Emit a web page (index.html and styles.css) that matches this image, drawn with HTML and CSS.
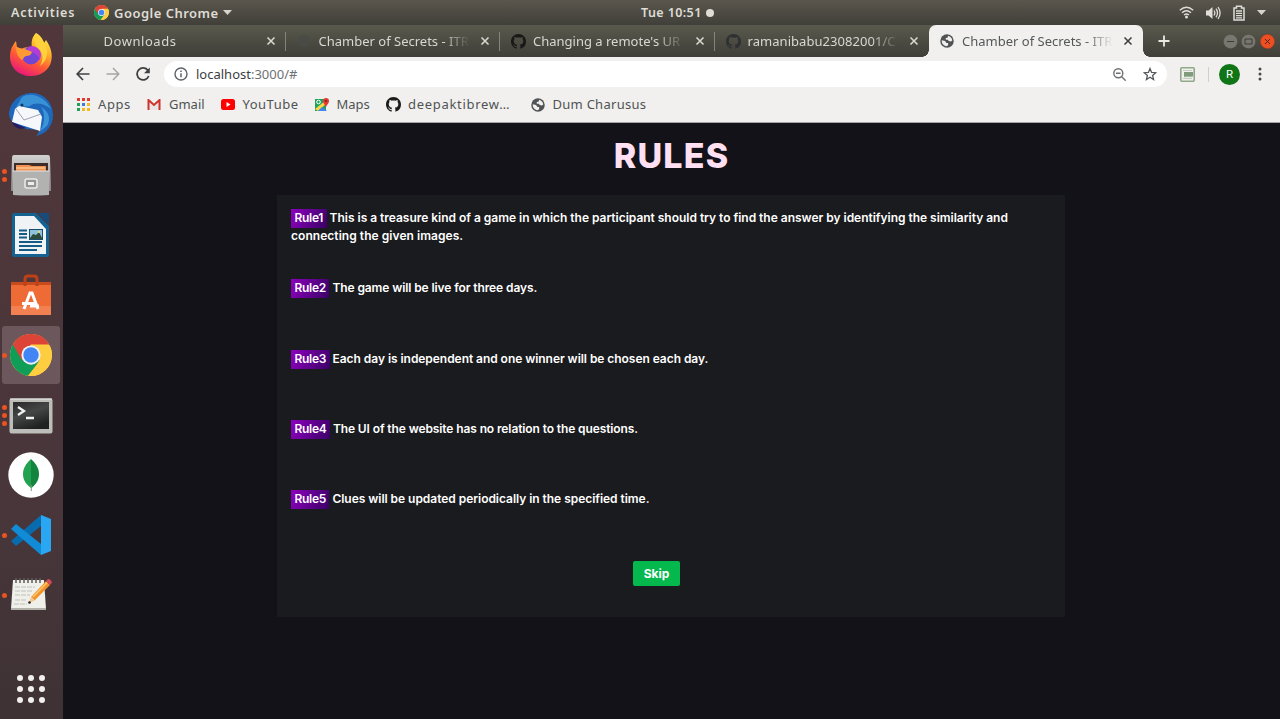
FILE: index.html
```html
<!DOCTYPE html>
<html lang="en">
<head>
<meta charset="utf-8">
<title>Chamber of Secrets - ITRIX</title>
<link rel="stylesheet" href="styles.css">
</head>
<body>
<svg class="defs" width="0" height="0">
  <symbol id="chrome" viewBox="0 0 48 48">
    <circle cx="24" cy="24" r="24" fill="#ffcd40"/>
    <path d="M24 24 3.2 12A24 24 0 0 0 20.5 47.7L34.5 30z" fill="#0f9d58"/>
    <path d="M3.2 12A24 24 0 0 1 44.8 12H24L13.6 30z" fill="#db4437"/>
    <path d="M24 13H45.3A24 24 0 0 1 23.5 48L34 29z" fill="#ffcd40"/>
    <circle cx="24" cy="24" r="11" fill="#f1f1f1"/>
    <circle cx="24" cy="24" r="8.8" fill="#4285f4"/>
  </symbol>
  <symbol id="github" viewBox="0 0 16 16">
    <path fill="currentColor" d="M8 0C3.58 0 0 3.58 0 8c0 3.54 2.29 6.53 5.47 7.59.4.07.55-.17.55-.38 0-.19-.01-.82-.01-1.49-2.01.37-2.53-.49-2.69-.94-.09-.23-.48-.94-.82-1.13-.28-.15-.68-.52-.01-.53.63-.01 1.08.58 1.23.82.72 1.21 1.87.87 2.33.66.07-.52.28-.87.51-1.07-1.78-.2-3.64-.89-3.64-3.95 0-.87.31-1.59.82-2.15-.08-.2-.36-1.02.08-2.12 0 0 .67-.21 2.2.82.64-.18 1.32-.27 2-.27s1.36.09 2 .27c1.53-1.04 2.2-.82 2.2-.82.44 1.1.16 1.92.08 2.12.51.56.82 1.27.82 2.15 0 3.07-1.87 3.75-3.65 3.95.29.25.54.73.54 1.48 0 1.07-.01 1.93-.01 2.2 0 .21.15.46.55.38A8.01 8.01 0 0 0 16 8c0-4.42-3.58-8-8-8z"/>
  </symbol>
  <symbol id="globe" viewBox="0 0 16 16">
    <circle cx="8" cy="8" r="7.7" fill="#505356"/>
    <path d="M2 7.200 5.800 8l1.500 2.200h2v2.600l-1.800 1.100C4 13.600 1.800 11 2 7.200zM9.300 2c2.500.6 4.500 2.700 4.700 5.500l-1.500 1-2.600-.4-.8-1.500H6.600V4.700l2-.5z" fill="#f1f0ee"/>
  </symbol>
  <symbol id="close" viewBox="0 0 10 10"><path d="M1.500 1.500l7 7M8.500 1.500l-7 7" stroke="currentColor" stroke-width="1.600"/></symbol>
</svg>

<header class="topbar">
  <span class="activities">Activities</span>
  <span class="app-menu"><svg width="15" height="15"><use href="#chrome"/></svg><span class="app-name">Google Chrome</span><svg width="9" height="5"><path d="M0 0h9L4.500 5z" fill="#d6d4cf"/></svg></span>
  <span class="clock">Tue 10:51<i class="dot"></i></span>
  <span class="status">
    <svg width="15" height="13" viewBox="0 0 15 13" fill="none" stroke="#deddd8"><path d="M.8 4.200Q7.500-1.500 14.200 4.200" stroke-width="1.400"/><path d="M3 6.700q4.500-4 9 0" stroke-width="1.400"/><path d="M5 9q2.500-2 5 0" stroke-width="1.300"/><circle cx="7.500" cy="11" r="1.500" fill="#deddd8" stroke="none"/></svg>
    <svg width="15" height="14" viewBox="0 0 15 14" fill="none" stroke="#deddd8"><path d="M0 4.500h2.500L6.500 1v12l-4-3.500H0z" fill="#deddd8" stroke="none"/><path d="M8 4.500q1.700 2.500 0 5M10 2.700q3 4.300 0 8.600M12 1q4.200 6 0 12" stroke-width="1.300"/></svg>
    <svg width="12" height="16" viewBox="0 0 12 16" fill="none" stroke="#deddd8"><path d="M1 3h2.500V1.200h5V3H11v12H1z" stroke-width="1.500"/><path d="M3 6h6M3 8.300h6M3 10.600h6M3 12.900h6" stroke-width="1.300"/></svg>
    <svg width="9" height="5"><path d="M0 0h9L4.500 5z" fill="#d6d4cf"/></svg>
  </span>
</header>

<div class="desktop">
<nav class="dock">
  <div class="slot"><svg width="46" height="48" viewBox="0 0 46 48">
    <defs><linearGradient id="ff" x1=".8" y1="0" x2=".3" y2="1"><stop offset="0" stop-color="#fff04a"/><stop offset=".35" stop-color="#ffb02a"/><stop offset=".65" stop-color="#ff5a35"/><stop offset="1" stop-color="#e8157d"/></linearGradient></defs>
    <path d="M28 2c4 2 7 6 8 10l2-3c5 7 7 15 5 22-2 8-10 14-20 14C11 45 2 37 2 26c0-7 2-11 6-16l1 6 4 2c4-2 8-2 11-2-1-5 0-10 4-14z" fill="url(#ff)"/>
    <circle cx="23" cy="24.500" r="9" fill="#7245d5"/>
    <path d="M20 16c5-3 13 1 13 8 0 2-1 4-2 6 1-5-4-9-11-9z" fill="#b13dd5"/>
    <path d="M8 16l7 2c4 0 6 2 9 3-1 3-3 4-6 4-3 1-2 3-4 4-4-2-6-8-6-13z" fill="#ff9a32"/>
    <path d="M28 2c4 5 9 8 11 16 1 8-2 13-7 17 4-7 3-13-1-17-4-3-6-9-3-16z" fill="#ffd23b"/>
  </svg></div>
  <div class="slot"><svg width="46" height="46" viewBox="0 0 46 46">
    <path d="M1 23C1 11 11 1 24 1c12 0 21 10 21 22 0 11-7 19-17 21l5-6C16 38 3 34 1 23z" fill="#1e67ba"/>
    <path d="M14 5c9-6 24 0 29 12-8-6-16-7-21-3-7 1-11-1-16 5z" fill="#3a92d6"/>
    <path d="M33 15c5 7 4 19-3 26l9-7c4-7 2-15-6-19z" fill="#3c93d7"/>
    <path d="M7 17l4-3 19 4 4 7-2 14L4 30z" fill="#f6f7fb"/>
    <path d="M8 17l8 11 17-6" fill="none" stroke="#9aa4b2"/>
    <path d="M4 30c2 6 8 8 14 6z" fill="#271a5e"/><circle cx="14" cy="13" r="1.500" fill="#17355f"/>
  </svg></div>
  <div class="slot"><i class="pips"><b></b><b></b></i><svg width="42" height="44" viewBox="0 0 42 44">
    <defs><linearGradient id="cab" x2="0" y2="1"><stop stop-color="#d1d1cf"/><stop offset="1" stop-color="#8e8e8d"/></linearGradient></defs>
    <path d="M4 2h34q2 0 2 3l1 33H1L2 5q0-3 2-3z" fill="url(#cab)"/><path d="M4 10h34v10H4z" fill="#3c2d28"/><path d="M6 12h13l3 1h14v8H6z" fill="#f19151"/><path d="M6 15h29" stroke="#ffe1b0"/>
    <path d="M3 18h36v24q-18 1-36 0z" fill="#b2b2b1"/><path d="M3 18h36" stroke="#e4e4e2"/><rect x="15" y="26" width="12" height="9" rx="2" fill="#969695" stroke="#ececeb" stroke-width="1.500"/><rect x="18" y="29" width="6" height="3" fill="#eee"/>
  </svg></div>
  <div class="slot"><svg width="40" height="46" viewBox="0 0 40 46">
    <path d="M3 1h22l13 13v29q0 2-2 2H3q-2 0-2-2V3q0-2 2-2z" fill="#146291"/><path d="M27 1h11v12z" fill="#164b7b"/><path d="M4 4h19l12 13v25H4z" fill="#f0f3f5"/>
    <path d="M8 18.500h8M8 22h8M8 25.500h8M8 30h23M8 34h23M8 38h18" stroke="#145b86" stroke-width="2"/><path d="M18 17h14v11H18z" fill="#174d6a"/><path d="M19 18h12v9H19z" fill="#8fc3dc"/><path d="M19 26l3-4 3 1 3-3 3 6v1H19z" fill="#2c4b38"/><circle cx="28" cy="20" r="1" fill="#ffdc5e"/>
  </svg></div>
  <div class="slot"><svg width="42" height="42" viewBox="0 0 42 42">
    <path d="M1 8h40v33H1z" fill="#ef6b35"/><path d="M1 8h40v3H1z" fill="#c84b1d"/><path d="M1 32h40v9H1z" fill="#f28050"/><path d="M15 12V5q0-3 3-3h6q3 0 3 3v7" fill="none" stroke="#bd4017" stroke-width="3"/><path d="M14 35l6-16h2l6 16M12 29.500h15M20 32h9" fill="none" stroke="#fff" stroke-width="3"/>
  </svg></div>
  <div class="slot current"><i class="pips"><b></b></i><svg width="42" height="42"><use href="#chrome"/></svg></div>
  <div class="slot lower"><i class="pips"><b></b><b></b><b></b></i><svg width="44" height="36" viewBox="0 0 44 36">
    <defs><linearGradient id="term" x2=".5" y2="1"><stop stop-color="#292929"/><stop offset=".5" stop-color="#454746"/><stop offset="1" stop-color="#202222"/></linearGradient></defs>
    <rect x=".5" y=".5" width="43" height="35" rx="2" fill="#bdbdb9"/><path d="M1 1h42" stroke="#eee"/><rect x="4" y="4" width="36" height="27" fill="url(#term)"/><path d="M9 9l6 4-6 4M17 20h8" fill="none" stroke="#f2f2f2" stroke-width="2.300"/>
  </svg></div>
  <div class="slot"><svg width="46" height="46" viewBox="0 0 46 46"><circle cx="23" cy="23" r="22.700" fill="#fff"/><path d="M23 7c5 5 8 9 8 15 0 7-4 11-7.500 14H23z" fill="#13843e"/><path d="M23 7c-5 5-8 9-8 15 0 7 4 11 8 14z" fill="#20a251"/><path d="M23.300 33v6" stroke="#7e9d80"/></svg></div>
  <div class="slot"><i class="pips"><b></b></i><svg width="42" height="42" viewBox="0 0 42 42"><path d="M1 27l5 5 25-20V1z" fill="#086bad"/><path d="M1 15l5-5 25 20v11z" fill="#128bd7"/><path d="M31 1l10 4v32l-10 4z" fill="#2aa7f2"/></svg></div>
  <div class="slot"><i class="pips"><b></b></i><svg width="44" height="38" viewBox="0 0 44 38">
    <path d="M4 4h31l2 29H2z" fill="#f0f0eb"/><path d="M2 32h35v2H2z" fill="#b2b1aa"/>
    <path d="M7 2v5M11 2v5M15 2v5M19 2v5M23 2v5M27 2v5M31 2v5" stroke="#5d5b5b" stroke-width="1.500"/>
    <path d="M6 11h20M6 15h18M6 19h15M6 24h12M5 28h13" stroke="#c0bfbc" stroke-dasharray="5 1"/>
    <path d="M20 27l2.500-6.500L37 5l4 4-15 15z" fill="#f1922b"/><path d="M24 21 38 6.500" stroke="#ffc568" stroke-width="1.700"/><path d="M37 5l2-2q3 0 4 3.500l-2 2.500z" fill="#d24a59"/><path d="M20 27l2.500-6 3 3z" fill="#f3cd98"/><circle cx="20.500" cy="26.500" r="1.300" fill="#222"/>
  </svg></div>
  <div class="apps"><i></i><i></i><i></i><i></i><i></i><i></i><i></i><i></i><i></i></div>
</nav>

<main class="window">
  <div class="tabs">
    <div class="tab"><span class="favicon"></span><span class="label t1">Downloads</span><svg class="x"><use href="#close"/></svg></div>
    <div class="tab"><span class="favicon"><svg width="14" height="14"><circle cx="7" cy="7" r="6" fill="#494b46"/></svg></span><span class="label t2">Chamber of Secrets - ITR</span><svg class="x"><use href="#close"/></svg></div>
    <div class="tab"><span class="favicon dark"><svg width="15" height="15"><use href="#github"/></svg></span><span class="label t3">Changing a remote's UR</span><svg class="x"><use href="#close"/></svg></div>
    <div class="tab last"><span class="favicon dim"><svg width="15" height="15"><use href="#github"/></svg></span><span class="label t4">ramanibabu23082001/C</span><svg class="x"><use href="#close"/></svg></div>
    <div class="tab active"><span class="favicon"><svg width="14" height="14"><use href="#globe"/></svg></span><span class="label t2">Chamber of Secrets - ITR</span><svg class="x"><use href="#close"/></svg></div>
    <svg class="new-tab" width="12" height="12"><path d="M6 .5v11M.5 6h11" stroke="#e9e8e3" stroke-width="1.800"/></svg>
    <div class="controls">
      <svg width="15" height="15"><circle cx="7.500" cy="7.500" r="7.200" fill="#78776f" stroke="#4a4943" stroke-width=".6"/><path d="M4 7.500h7" stroke="#3c3b37"/></svg>
      <svg width="15" height="15"><circle cx="7.500" cy="7.500" r="7.200" fill="#78776f" stroke="#4a4943" stroke-width=".6"/><path d="M4 5h7v5H4z" fill="none" stroke="#3c3b37"/></svg>
      <svg width="15" height="15"><circle cx="7.500" cy="7.500" r="7.200" fill="#ee4f22" stroke="#8a3a22" stroke-width=".6"/><path d="M5 5l5 5m0-5-5 5" stroke="#51261a"/></svg>
    </div>
  </div>

  <div class="toolbar">
    <svg class="nav-btn" width="14" height="14" viewBox="0 0 14 14" fill="none" stroke="#3f4144" stroke-width="1.700"><path d="M13.500 7H1.500M7 1 1.200 7 7 13"/></svg>
    <svg class="nav-btn" width="14" height="14" viewBox="0 0 14 14" fill="none" stroke="#a4a5a5" stroke-width="1.500"><path d="M.5 7h12M7 1l5.800 6L7 13"/></svg>
    <svg class="nav-btn" width="14" height="14" viewBox="0 0 14 14" fill="none" stroke="#3f4144" stroke-width="1.800"><path d="M12 3.500A6 6 0 1 0 12.700 9"/><path d="M13.800.5v5.700H8z" fill="#3f4144" stroke="none"/></svg>
    <div class="omnibox">
      <svg width="14" height="14" fill="none" stroke="#5f6368"><circle cx="7" cy="7" r="6" stroke-width="1.400"/><path d="M7 6.200v4M7 3.500v1.500" stroke-width="1.500"/></svg>
      <span class="url">localhost<em>:3000/#</em></span>
      <svg class="zoom" width="13" height="13" fill="none" stroke="#6d7073" stroke-width="1.400"><circle cx="5.300" cy="5.300" r="4.500"/><path d="M8.700 8.700l4 4M3 5.300h4.600"/></svg>
      <svg width="14" height="14" viewBox="0 0 14 14" fill="none" stroke="#55585b" stroke-width="1.300"><path d="M7 1.500l1.600 3.900 4.200.3-3.200 2.700 1 4.100L7 10.300l-3.600 2.200 1-4.100L1.200 5.700l4.200-.3z"/></svg>
    </div>
    <svg class="extension" width="15" height="15" viewBox="0 0 15 15" fill="none"><rect x=".8" y=".8" width="13.400" height="13.400" rx="1" stroke="#91a88b" stroke-width="1.600"/><path d="M3 3.500h9M3 11.500h9" stroke="#c4cfc0"/><path d="M4 5h9v5l-1-1-1 1.500L10 9l-1 1.500L8 9l-1 1.500L6 9l-1 1.500-1-1z" fill="#7f9b7c"/></svg>
    <i class="rule-line"></i>
    <span class="avatar">R</span>
    <svg class="more" width="4" height="14" fill="#46484a"><circle cx="2" cy="2" r="1.500"/><circle cx="2" cy="7" r="1.500"/><circle cx="2" cy="12" r="1.500"/></svg>
  </div>

  <div class="bookmarks">
    <a class="bm b1"><svg width="13" height="13"><path d="M0 0h3v3H0zM5 0h3v3H5zM10 0h3v3h-3z" fill="#e03b32"/><path d="M0 5h3v3H0z" fill="#20a159"/><path d="M5 5h3v3H5z" fill="#3d78df"/><path d="M10 5h3v3h-3zM5 10h3v3H5zM10 10h3v3h-3z" fill="#f2b927"/><path d="M0 10h3v3H0z" fill="#20a159"/></svg><span>Apps</span></a>
    <a class="bm b2"><svg width="14" height="11"><path d="M1.500 11V1L7 6l5.500-5v10" fill="#e8e5e5" stroke="#d0322d" stroke-width="2"/></svg><span>Gmail</span></a>
    <a class="bm b3"><svg width="14" height="11"><rect width="14" height="11" rx="2.500" fill="#f00"/><path d="M5.500 3v5l4-2.500z" fill="#fff"/></svg><span>YouTube</span></a>
    <a class="bm b4"><svg width="14" height="14"><path d="M0 1h11v12H0z" fill="#20a45b"/><path d="M0 11 10 3l2 2-9 8z" fill="#ffd54a"/><path d="M3 13l4-4 5 4z" fill="#4285f4"/><circle cx="3.500" cy="4" r="1.800" fill="none" stroke="#fff"/><path d="M11 10c0-3-3-4-3-7a3 3 0 0 1 6 0c0 3-3 4-3 7z" fill="#e53935"/><circle cx="11" cy="3" r="1" fill="#7d1c1a"/></svg><span>Maps</span></a>
    <a class="bm b5"><svg width="15" height="15"><use href="#github"/></svg><span>deepaktibrew…</span></a>
    <a class="bm b6"><svg width="14" height="14"><use href="#globe"/></svg><span>Dum Charusus</span></a>
  </div>

  <section class="page">
    <h1>RULES</h1>
    <div class="card">
      <p class="r1"><mark>Rule1</mark><span class="first">This is a treasure kind of a game in which the participant should try to find the answer by identifying the similarity and</span><br><span class="second">connecting the given images.</span></p>
      <p class="r2"><mark>Rule2</mark><span>The game will be live for three days.</span></p>
      <p class="r3"><mark>Rule3</mark><span>Each day is independent and one winner will be chosen each day.</span></p>
      <p class="r4"><mark>Rule4</mark><span>The UI of the website has no relation to the questions.</span></p>
      <p class="r5"><mark>Rule5</mark><span>Clues will be updated periodically in the specified time.</span></p>
      <button>Skip</button>
    </div>
  </section>
</main>
</div>
</body>
</html>
```
FILE: styles.css
```css
* { box-sizing: border-box; }
body { margin: 0; width: 1280px; height: 719px; overflow: hidden; display: flex; flex-direction: column; font-family: "Noto Sans", sans-serif; font-size: 13px; background: #131218; }
svg { display: block; flex: none; }
.defs { position: absolute; }
.topbar { height: 25px; flex: none; display: grid; grid-template-columns: 83px 1fr 80px 1fr; align-items: center; padding: 0 14px 0 11px; background: linear-gradient(#5a564d, #403f39); color: #dfdcd5; font-weight: 600; white-space: nowrap; }
.activities { font-size: 12.5px; letter-spacing: .85px; }
.app-menu { display: flex; align-items: center; }
.app-name { width: 103px; margin: 0 6px 0 5px; letter-spacing: .48px; }
.clock { display: flex; align-items: center; font-size: 12.5px; letter-spacing: .4px; margin-left: 1px; }
.dot { width: 8px; height: 8px; border-radius: 50%; background: #dfdcd5; margin-left: 4px; }
.status { display: flex; align-items: center; justify-content: flex-end; gap: 12px; }
.desktop { display: flex; flex: 1; min-height: 0; }

.dock { width: 63px; flex: none; display: flex; flex-direction: column; background: linear-gradient(#51373b, #48363a 70%, #3e3235); }
.slot { height: 60px; padding-right: 1px; display: flex; align-items: center; justify-content: center; position: relative; flex: none; }
.lower { padding-top: 2px; }
.current { width: 58px; height: 58px; margin: 1px 0 1px 2px; border-radius: 3px; background: #6b575c; padding: 0; }
.pips { position: absolute; left: 2px; top: 0; height: 100%; display: flex; flex-direction: column; justify-content: center; gap: 3px; }
.current .pips { left: 0; }
.pips b { width: 5px; height: 5px; border-radius: 50%; background: #e95420; }
.apps { margin: 50px 0 0 17px; display: grid; grid-template-columns: repeat(3, 6px); gap: 5px; }
.apps i { width: 6px; height: 6px; border-radius: 50%; background: #f2eff0; }

.window { flex: 1; min-width: 0; display: flex; flex-direction: column; }
.tabs { height: 32px; flex: none; display: flex; align-items: center; padding-left: 8px; background: linear-gradient(#5a594d, #3f3e38); }
.tab { width: 214.5px; height: 32px; flex: none; display: flex; align-items: center; padding: 0 10px 0 11px; color: #d8d7d0; position: relative; }
.tab:first-child { width: 215px; }
.tab:not(.last):not(.active)::after { content: ""; position: absolute; right: 0; top: 7px; width: 1px; height: 19px; background: #85847b; }
.tabs .tab { margin-left: 0; }
.favicon { width: 22px; flex: none; }
.dark { color: #181818; }
.dim { color: #2e3033; }
.label { flex: 1; min-width: 0; white-space: nowrap; margin-right: 10px; -webkit-mask-image: linear-gradient(90deg, #000 calc(100% - 28px), transparent); mask-image: linear-gradient(90deg, #000 calc(100% - 28px), transparent); }
.t1 { letter-spacing: .55px; }
.t4 { letter-spacing: .05px; }
.x { width: 10px; height: 10px; }
.active { width: 214px; color: #55585a; background: #f1f0ee; border-radius: 7px 7px 0 0; }
.active .x { color: #3f4144; }
.active::before, .active::after { content: ""; position: absolute; bottom: 0; width: 7px; height: 7px; }
.active::before { left: -7px; background: radial-gradient(circle at 0 0, transparent 6.5px, #f1f0ee 7px); }
.active::after { right: -7px; background: radial-gradient(circle at 100% 0, transparent 6.5px, #f1f0ee 7px); }
.tabs { padding-left: 7.5px; }
.new-tab { margin-left: 14.5px; }
.controls { display: flex; gap: 3.7px; margin-left: auto; padding-right: 5px; }

.toolbar { height: 34px; flex: none; display: flex; align-items: center; padding-left: 13px; background: #f1f0ee; }
.nav-btn { margin-right: 16px; }
.omnibox { width: 1003px; height: 26px; margin-left: -2px; border-radius: 13px; background: #fff; display: flex; align-items: center; padding: 0 10px; }
.url { margin: -1px 0 0 8px; color: #3b3e42; }
.url em { font-style: normal; color: #6e7175; }
.zoom { margin-left: auto; margin-right: 17px; }
.extension { margin-left: 13px; }
.rule-line { width: 1px; height: 15px; background: #cfcfcd; margin-left: 13px; }
.avatar { width: 21px; height: 21px; border-radius: 50%; background: #107516; color: #fff; font: 11.5px/21px Roboto, sans-serif; text-align: center; margin-left: 10px; }
.more { margin-left: 18px; }

.bookmarks { height: 32px; flex: none; display: flex; padding: 0 0 4px 14px; background: #f1f0ee; border-bottom: 1px solid #a5a4a8; color: #505355; }
.bm { display: flex; align-items: center; gap: 8px; white-space: nowrap; }
.bm span { margin-top: -1px; }
.b1 { width: 70px; letter-spacing: .6px; }
.b2 { width: 73.5px; }
.b3 { width: 94px; letter-spacing: .5px; }
.b4 { width: 71.5px; }
.b5 { width: 144.5px; letter-spacing: .7px; gap: 7px; }
.b6 { letter-spacing: .27px; }
.b5 svg { color: #1b1b1b; }

.page { flex: 1; background: #131218; font-family: Inter, sans-serif; padding: 0 215px 0 214px; }
h1 { margin: 0; height: 72px; padding-left: 1px; text-align: center; color: #ffe0f2; font-size: 34px; line-height: 65px; font-weight: 800; letter-spacing: 1.2px; }
.card { height: 422px; background: #1a1b1e; padding: 14px 14px 0; color: #fff; display: flex; flex-direction: column; align-items: flex-start; }
.card p { margin: 0; height: 70.3px; font-size: 12px; line-height: 18px; font-weight: 600; letter-spacing: -.2px; white-space: nowrap; }
mark { display: inline-block; height: 19px; padding: 0 3.5px; margin: 0 3px -1px 0; letter-spacing: -.3px; color: #fff; background: linear-gradient(110deg, #8d00bd, #3b0067); vertical-align: top; }
.first { letter-spacing: -.02px; }
.second { letter-spacing: .05px; }
.r2 span { letter-spacing: -.1px; }
.r3 span { letter-spacing: -.05px; }
.r4 span { letter-spacing: -.11px; }
.r5 span { letter-spacing: -.04px; }
button { align-self: center; width: 47px; height: 25px; padding: 0; margin: .5px 0 0 -29px; border: 0; border-radius: 2px; background: #04b84e; color: #fff; font: 700 12px Inter, sans-serif; }
```
